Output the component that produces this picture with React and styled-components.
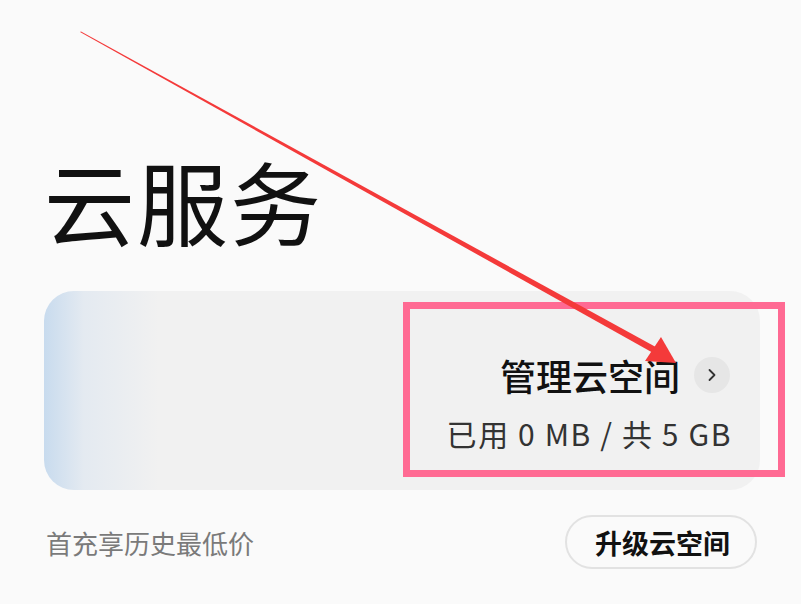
import React from "react";
import styled, { createGlobalStyle } from "styled-components";

const GlobalStyle = createGlobalStyle`
    body {
        margin: 0;
        background: #fafafa;
        font-family: "Noto Sans CJK SC", "Noto Sans", sans-serif;
    }
`;

const Page = styled.div`
    position: relative;
    width: 801px;
    height: 604px;
    overflow: hidden;
    background: #fafafa;
`;

const Title = styled.h1`
    margin: 0;
    padding: 140px 0 0 44px;
    font-size: 91px;
    line-height: 118px;
    font-weight: 400;
    color: #111;
    letter-spacing: 2px;
`;

const Card = styled.div`
    margin: 33px 41px 0 44px;
    height: 199px;
    border-radius: 30px;
    background: linear-gradient(90deg, #c8dbee 0px, #e4eaf1 40px, #f1f1f1 115px);
    display: flex;
    flex-direction: column;
    align-items: flex-end;
    justify-content: center;
    padding-right: 30px;
    padding-top: 22px;
    box-sizing: border-box;
`;

const ManageRow = styled.div`
    display: flex;
    align-items: center;
    gap: 14px;
`;

const ManageText = styled.span`
    font-size: 36px;
    font-weight: 500;
    color: #111;
    line-height: 48px;
`;

const Chevron = styled.span`
    display: flex;
    align-items: center;
    justify-content: center;
    width: 36px;
    height: 36px;
    border-radius: 50%;
    background: #e6e6e6;
`;

const Usage = styled.div`
    margin-top: 14px;
    font-size: 30px;
    color: #333;
    line-height: 40px;
    letter-spacing: 1.6px;
    margin-right: -2px;
`;

const Footer = styled.div`
    display: flex;
    align-items: center;
    justify-content: space-between;
    margin: 25px 44px 0 46px;
`;

const Promo = styled.span`
    font-size: 26px;
    color: #7a7a7a;
`;

const UpgradeButton = styled.button`
    height: 54px;
    padding: 0 25px 0 28px;
    border: 2px solid #e2e2e2;
    border-radius: 27px;
    background: transparent;
    font-family: inherit;
    font-size: 27px;
    font-weight: 700;
    color: #111;
`;

const Overlay = styled.svg`
    position: absolute;
    left: 0;
    top: 0;
    pointer-events: none;
`;

export default function App() {
    return (
        <Page>
            <GlobalStyle />
            <Title>云服务</Title>
            <Card>
                <ManageRow>
                    <ManageText>管理云空间</ManageText>
                    <Chevron>
                        <svg width="16" height="16" viewBox="0 0 16 16">
                            <path d="M5.5 3 L10.5 8 L5.5 13" fill="none" stroke="#333" strokeWidth="1.8" strokeLinecap="round" strokeLinejoin="round" />
                        </svg>
                    </Chevron>
                </ManageRow>
                <Usage>已用 0 MB / 共 5 GB</Usage>
            </Card>
            <Footer>
                <Promo>首充享历史最低价</Promo>
                <UpgradeButton>升级云空间</UpgradeButton>
            </Footer>
            <Overlay width="801" height="604" viewBox="0 0 801 604">
                <rect x="406.5" y="305.5" width="375" height="168" fill="none" stroke="#ff6a93" strokeWidth="7" />
                <polygon points="80,32 81,31.5 658.5,348.5 655,354" fill="#f43a3a" />
                <polygon points="676,363 645,361 661,337" fill="#f43a3a" />
            </Overlay>
        </Page>
    );
}
